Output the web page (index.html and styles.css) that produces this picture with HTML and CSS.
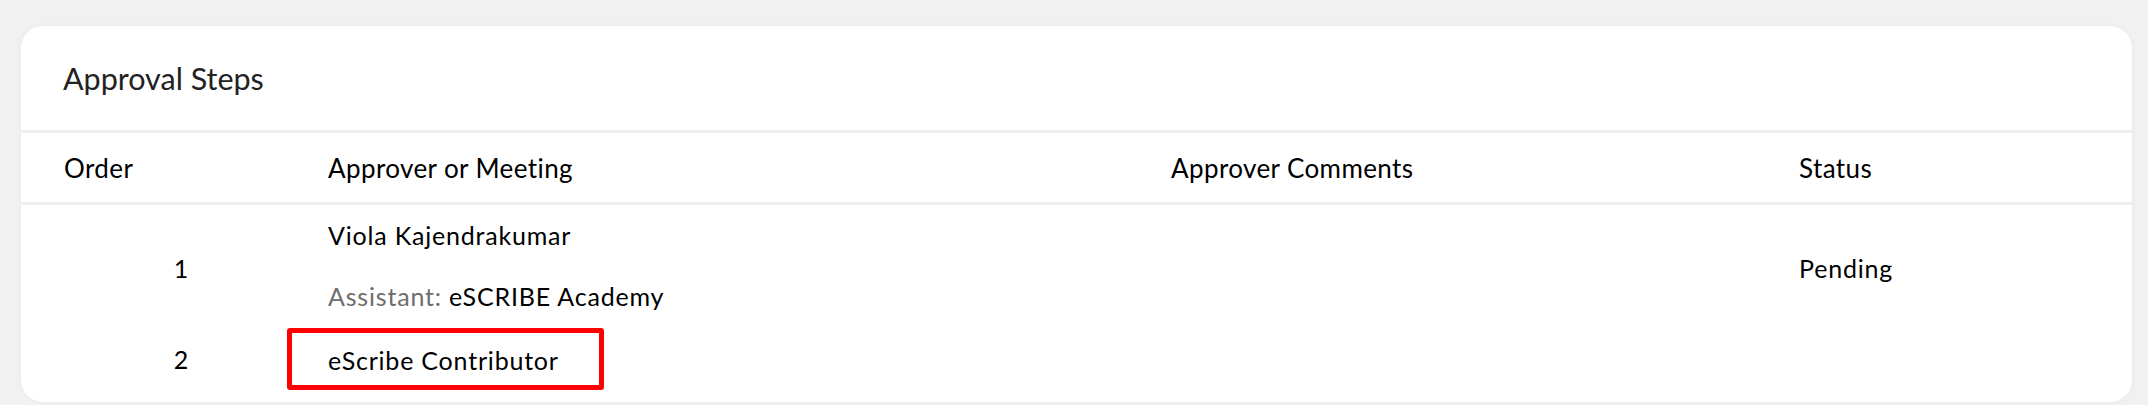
FILE: index.html
```html
<!DOCTYPE html>
<html lang="en">
<head>
<meta charset="utf-8">
<title>Approval Steps</title>
<link rel="stylesheet" href="styles.css">
</head>
<body>
<div class="page">
  <section class="card">
    <header class="card-header">
      <h2 class="card-title">Approval Steps</h2>
    </header>
    <div class="table">
      <div class="row head">
        <div class="cell c-order">Order</div>
        <div class="cell c-approver">Approver or Meeting</div>
        <div class="cell c-comments">Approver Comments</div>
        <div class="cell c-status">Status</div>
      </div>
      <div class="body">
        <div class="row step step-1">
          <div class="cell c-order num">1</div>
          <div class="cell c-approver">
            <div class="name">Viola Kajendrakumar</div>
            <div class="assistant"><span class="label">Assistant:</span> eSCRIBE Academy</div>
          </div>
          <div class="cell c-comments"></div>
          <div class="cell c-status status">Pending</div>
        </div>
        <div class="row step step-2">
          <div class="cell c-order num">2</div>
          <div class="cell c-approver">
            <span class="highlight">eScribe Contributor</span>
          </div>
          <div class="cell c-comments"></div>
          <div class="cell c-status"></div>
        </div>
      </div>
    </div>
  </section>
</div>
</body>
</html>
```

FILE: styles.css
```css
html, body {
  margin: 0;
  padding: 0;
}
body {
  background: #f1f1f1;
  font-family: Lato, "Noto Sans", "Liberation Sans", sans-serif;
  color: #000;
  height: 405px;
  overflow: hidden;
}
.page {
  padding: 26px 16px 0 21px;
}
.card {
  background: #fff;
  border-radius: 22px;
  height: 376px;
  box-shadow: 0 0 6px rgba(0, 0, 0, 0.04);
  overflow: hidden;
}
.card-header {
  box-sizing: border-box;
  height: 107px;
  padding-left: 42px;
  border-bottom: 3px solid #efefef;
}
.card-title {
  margin: 0;
  padding-top: 32px;
  font-size: 30.5px;
  line-height: 40px;
  font-weight: 400;
  color: #222;
}
.row {
  display: grid;
  grid-template-columns: 264px 843px 628px 1fr;
  padding-left: 43px;
}
.head {
  height: 72px;
  box-sizing: border-box;
  border-bottom: 3px solid #efefef;
  align-items: center;
  font-size: 26px;
  letter-spacing: 0.4px;
  line-height: 32px;
}
.step {
  font-size: 25px;
  letter-spacing: 0.8px;
  line-height: 32px;
  align-items: center;
}
.step-1 {
  padding-top: 14px;
}
.num {
  width: 234px;
  text-align: center;
  letter-spacing: 0;
}
.step-1 .num,
.step-1 .status {
  padding-top: 4px;
}
.name {
  margin-bottom: 29px;
}
.label {
  color: #6d6d6d;
}
.step-2 {
  padding-top: 16px;
}
.highlight {
  display: inline-block;
  margin-left: -41px;
  padding: 11px 40px 9px 36px;
  border: 5px solid #fe0000;
  border-radius: 3px;
}
```
